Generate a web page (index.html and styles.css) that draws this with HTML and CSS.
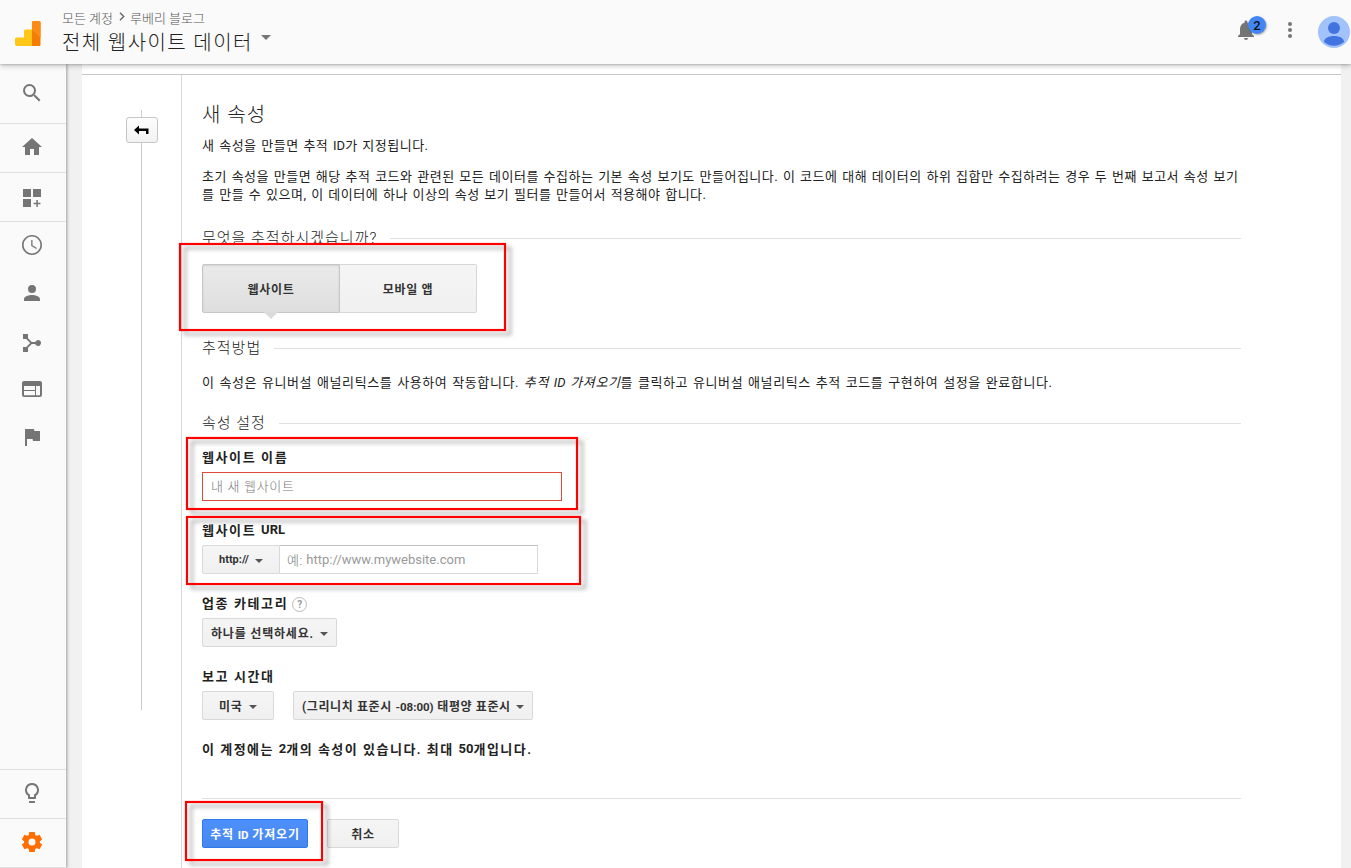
FILE: index.html
```html
<!DOCTYPE html>
<html lang="ko">
<head>
<meta charset="utf-8">
<title>새 속성</title>
<link rel="stylesheet" href="styles.css">
</head>
<body>
<header class="topbar">
  <svg class="logo" width="26" height="26" viewBox="0 0 26 26">
    <path fill="#ffc517" d="M1.500 16.500H9V10a1.500 1.500 0 0 1 1.500-1.500H17V25H2a2 2 0 0 1-2-2v-5a1.500 1.500 0 0 1 1.500-1.500z"/>
    <path fill="#f57c00" d="M18.500 0H24a1.500 1.500 0 0 1 1.500 1.500v22A1.500 1.500 0 0 1 24 25h-7V1.500A1.500 1.500 0 0 1 18.500 0z"/>
    <path fill="#fb8c15" d="M18.500 0H24a1.500 1.500 0 0 1 1.500 1.500V17L17 9V1.500A1.500 1.500 0 0 1 18.500 0z"/>
  </svg>
  <div class="titles">
    <div class="crumbs"><span>모든 계정</span><svg width="6" height="9" viewBox="0 0 6 9"><path d="M1 .8L4.700 4.500 1 8.200" fill="none" stroke="#666" stroke-width="1.400"/></svg><span>루베리 블로그</span></div>
    <div class="view"><span>전체 웹사이트 데이터</span><i class="caret caret-big"></i></div>
  </div>
  <div class="actions">
    <div class="bell">
      <svg width="24" height="24" viewBox="0 0 24 24" fill="#757575"><path d="M12 22c1.100 0 2-.9 2-2h-4c0 1.100.9 2 2 2zm6-6v-5c0-3.070-1.640-5.640-4.500-6.320V4c0-.83-.67-1.500-1.500-1.500s-1.500.67-1.500 1.500v.68C7.630 5.360 6 7.920 6 11v5l-2 2v1h16v-1l-2-2z"/></svg>
      <span class="count">2</span>
    </div>
    <svg class="more" width="6" height="18" viewBox="0 0 6 18" fill="#757575"><circle cx="3" cy="3" r="2"/><circle cx="3" cy="9" r="2"/><circle cx="3" cy="15" r="2"/></svg>
    <svg class="avatar" width="32" height="32" viewBox="0 0 32 32"><circle cx="16" cy="16" r="16" fill="#a1c2fa"/><circle cx="16" cy="12" r="6" fill="#4274e0"/><path fill="#4274e0" d="M6 26c0-4 5-6 10-6s10 2 10 6a15.500 15.500 0 0 1-20 0z"/></svg>
  </div>
</header>
<div class="body">
  <nav class="side">
    <a class="item search"><svg viewBox="0 0 24 24"><path d="M15.500 14h-.79l-.28-.27A6.470 6.470 0 0 0 16 9.500 6.500 6.500 0 1 0 9.500 16c1.610 0 3.090-.59 4.230-1.570l.27.28v.79l5 4.990L20.490 19l-4.990-5zm-6 0C7.010 14 5 11.990 5 9.500S7.010 5 9.500 5 14 7.010 14 9.500 11.990 14 9.500 14z"/></svg></a>
    <a class="item boxed raised"><svg viewBox="0 0 24 24"><path d="M10 20v-6h4v6h5v-8h3L12 3 2 12h3v8z"/></svg></a>
    <a class="item boxed lowered"><svg viewBox="0 0 24 24"><path d="M3 3h8v8H3zM13 3h8v8h-8zM3 13h8v8H3zM16.300 14h1.500v2.700h2.700v1.500h-2.700v2.700h-1.500v-2.700h-2.700v-1.500h2.700z"/></svg></a>
    <div class="reports">
      <a class="item raised"><svg viewBox="0 0 24 24"><path d="M11.990 2C6.470 2 2 6.480 2 12s4.470 10 9.990 10C17.520 22 22 17.520 22 12S17.520 2 11.990 2zM12 20.400a8.400 8.400 0 1 1 0-16.800 8.400 8.400 0 0 1 0 16.800zM12.500 7H11.200v6l5 3 .7-1.100-4.400-2.600z"/></svg></a>
      <a class="item raised"><svg viewBox="0 0 24 24"><path d="M12 12a4 4 0 1 0 0-8 4 4 0 0 0 0 8zm0 2c-2.670 0-8 1.340-8 4v2h16v-2c0-2.660-5.330-4-8-4z"/></svg></a>
      <a class="item lowered"><svg viewBox="0 0 24 24"><path d="M3 3h5v4.200l3.800 3.800h3.400a3 3 0 1 1 0 2h-3.400L8 16.800V21H3v-5h3.200l4-4-4-4H3z"/></svg></a>
      <a class="item raised"><svg viewBox="0 0 24 24"><path fill-rule="evenodd" d="M4 4h16a2 2 0 0 1 2 2v12a2 2 0 0 1-2 2H4a2 2 0 0 1-2-2V6c0-1.100.9-2 2-2zm0 5v4h11V9zm0 5v4.300h11V14zm12-5v9.300h4V9z"/></svg></a>
      <a class="item raised"><svg viewBox="0 0 24 24"><path d="M14.400 6L14 4H5v17h2v-7h5.600l.4 2h7V6z"/></svg></a>
    </div>
    <a class="item boxed raised"><svg viewBox="0 0 24 24"><path d="M9 21c0 .55.450 1 1 1h4c.55 0 1-.45 1-1v-1H9v1zm3-19a7 7 0 0 0-4 12.740V17c0 .55.450 1 1 1h6c.55 0 1-.45 1-1v-2.260A7 7 0 0 0 12 2zm2.850 11.100l-.85.6V16h-4v-2.300l-.85-.6A5 5 0 1 1 17 9c0 1.630-.8 3.160-2.150 4.100z"/></svg></a>
    <a class="item boxed admin raised"><svg viewBox="0 0 24 24"><path fill-rule="evenodd" d="M9.300 2h5.400l.5 2.900 1.500.9 2.800-1 2.700 4.600-2.300 1.900v1.400l2.300 1.900-2.700 4.600-2.800-1-1.500.9-.5 2.900H9.300l-.5-2.900-1.500-.9-2.800 1-2.700-4.600 2.300-1.900v-1.400L1.800 9.400l2.700-4.600 2.800 1 1.500-.9zM12 8.500a3.500 3.500 0 1 0 0 7 3.500 3.500 0 0 0 0-7z"/></svg></a>
  </nav>
  <main class="panel">
    <div class="strip"></div>
    <div class="columns">
      <aside class="rail"><div class="line"><button class="back"><svg width="15" height="10" viewBox="0 0 15 10"><path d="M0 5l5-4.500V3.500h9.500V9H12V6H5v3.500z"/></svg></button></div></aside>
      <section class="content">
        <h1>새 속성</h1>
        <p class="lead">새 속성을 만들면 추적 <span class="latin">ID</span>가 지정됩니다.</p>
        <p class="about">초기 속성을 만들면 해당 추적 코드와 관련된 모든 데이터를 수집하는 기본 속성 보기도 만들어집니다. 이 코드에 대해 데이터의 하위 집합만 수집하려는 경우 두 번째 보고서 속성 보기<br>를 만들 수 있으며, 이 데이터에 하나 이상의 속성 보기 필터를 만들어서 적용해야 합니다.</p>
        <h2 class="q">무엇을 추적하시겠습니까?</h2>
        <div class="tabs"><button class="tab active">웹사이트</button><button class="tab">모바일 앱</button></div>
        <h2 class="method">추적방법</h2>
        <p class="how">이 속성은 유니버설 애널리틱스를 사용하여 작동합니다. <em>추적 <span class="latin">ID</span> 가져오기</em>를 클릭하고 유니버설 애널리틱스 추적 코드를 구현하여 설정을 완료합니다.</p>
        <h2 class="settings">속성 설정</h2>
        <div class="label first">웹사이트 이름</div>
        <div class="field name-field">내 새 웹사이트</div>
        <div class="label">웹사이트 <span class="latin">URL</span></div>
        <div class="url"><button class="btn scheme"><span class="latin">http://</span><i class="caret"></i></button><div class="field url-field">예: <span class="latin">http://www.mywebsite.com</span></div></div>
        <div class="label">업종 카테고리<span class="help">?</span></div>
        <div class="row"><button class="btn industry">하나를 선택하세요.<i class="caret"></i></button></div>
        <div class="label">보고 시간대</div>
        <div class="row"><button class="btn country">미국<i class="caret"></i></button><button class="btn zone"><span>(그리니치 표준시 <span class="latin">-08:00)</span> 태평양 표준시</span><i class="caret"></i></button></div>
        <div class="label quota">이 계정에는 <span class="latin">2</span>개의 속성이 있습니다. 최대 <span class="latin">50</span>개입니다.</div>
        <div class="submit"><button class="btn primary"><span>추적 <span class="latin">ID</span> 가져오기</span></button><button class="btn cancel">취소</button></div>
      </section>
    </div>
  </main>
</div>
<div class="mark mark-type"></div>
<div class="mark mark-name"></div>
<div class="mark mark-url"></div>
<div class="mark mark-submit"></div>
</body>
</html>
```
FILE: styles.css
```css
* { box-sizing: border-box; }
body {
  margin: 0; width: 1351px; height: 868px; overflow: hidden; position: relative;
  display: flex; flex-direction: column;
  font-family: Roboto, "Noto Sans CJK KR", sans-serif; font-size: 13px; color: #222; background: #f1f1f1;
}
button { font-family: inherit; margin: 0; padding: 0; }
h1, h2, p { margin: 0; font-weight: 400; }
.latin { letter-spacing: 0; }

.topbar {
  flex: none; height: 64px; display: flex; background: #fafafa; position: relative; z-index: 2;
  box-shadow: 0 0 2px rgba(0,0,0,.3), 0 2px 5px rgba(0,0,0,.22);
}
.logo { margin: 21px 0 0 15px; }
.titles { margin-left: 21px; padding-top: 8px; }
.crumbs { display: flex; align-items: center; height: 18px; color: #555; font-weight: 300; white-space: nowrap; }
.crumbs svg { margin: -2px 5px 0 6px; }
.view { display: flex; align-items: center; height: 30px; font-size: 20px; font-weight: 300; letter-spacing: 1.4px; color: #212121; white-space: nowrap; }
.caret { display: inline-block; border: 4px solid transparent; border-top-color: #555; border-bottom: 0; }
.caret-big { border-width: 5px 5px 0; border-top-color: #757575; margin: -8px 0 0 8px; }
.actions { margin-left: auto; display: flex; }
.bell { position: relative; margin: 18px 0 0; width: 24px; height: 24px; }
.count {
  position: absolute; left: 14px; top: -2px; width: 18px; height: 18px; border-radius: 50%;
  background: #4285f4; color: #111; font-size: 13px; font-weight: 500; line-height: 19px; text-align: center; box-shadow: 1px 1px 2px rgba(0,0,0,.3);
}
.more { margin: 21px 0 0 29px; }
.avatar { margin: 16px 1px 0 25px; }

.body { flex: 1; display: flex; min-height: 0; }
.side { width: 66px; flex: none; background: #fafafa; display: flex; flex-direction: column; box-shadow: 1px 0 3px rgba(0,0,0,.35); }
.item { display: flex; align-items: center; justify-content: center; padding-right: 2px; height: 49px; flex: none; }
.item svg { width: 24px; height: 24px; fill: #757575; }
.search { height: 59px; padding-bottom: 2px; }
.boxed { border-top: 1px solid #e0e0e0; }
.raised { padding-bottom: 2px; }
.lowered { padding-top: 2px; }
.reports { flex: 1; border-top: 1px solid #e0e0e0; }
.reports .item { height: 48px; }
.admin { height: 50px; border-bottom: 1px solid #e0e0e0; }
.admin svg { fill: #ff6f00; }

.panel { width: 1259px; margin-left: 16px; background: #fff; display: flex; flex-direction: column; }
.strip { height: 11px; flex: none; border-bottom: 1px solid #c6c6c6; }
.columns { flex: 1; display: flex; }
.rail { width: 99px; padding: 35px 0 0 59px; }
.line { height: 600px; border-left: 1px solid #ccc; padding-top: 7px; }
.back { display: flex; align-items: center; justify-content: center; width: 32px; height: 26px; margin-left: -16px; padding-right: 2px; border: 1px solid #c6c6c6; border-radius: 3px; background: linear-gradient(#fdfdfd, #f2f2f2); }
.content { width: 1060px; border-left: 1px solid #d9d9d9; padding: 26px 0 0 20px; }

h1 { height: 28px; line-height: 28px; font-size: 20px; font-weight: 300; letter-spacing: 1px; }
p { line-height: 18px; letter-spacing: .5px; word-spacing: 1px; white-space: nowrap; }
.lead { margin-top: 8px; }
.about { margin-top: 13px; }
h2 { display: flex; align-items: center; gap: 13px; height: 20px; font-size: 15px; line-height: 20px; font-weight: 300; letter-spacing: 1px; white-space: nowrap; }
h2::after { content: ""; flex: 1; height: 1px; background: #e0e0e0; }
.q { margin-top: 24px; }
.method { margin-top: 25px; }
.how { margin-top: 16px; letter-spacing: .6px; }
.settings { margin-top: 21px; }

.tabs { display: flex; margin-top: 16px; height: 49px; }
.tab { position: relative; width: 137px; border: 1px solid #d6d6d6; border-left: 0; border-radius: 0 2px 2px 0; background: linear-gradient(#f5f5f5, #f0f0f0); font-size: 12px; font-weight: 700; letter-spacing: .7px; color: #333; }
.tab.active { width: 138px; border: 1px solid #c6c6c6; border-radius: 2px 0 0 2px; background: linear-gradient(#eaeaea, #dedede); box-shadow: inset 0 1px 2px rgba(0,0,0,.1); }
.tab.active::after { content: ""; position: absolute; left: 61px; top: 47px; border: 7px solid transparent; border-top-color: #dadada; border-bottom: 0; }

.label { display: flex; align-items: center; height: 18px; margin-top: 20px; padding-bottom: 2px; font-weight: 700; letter-spacing: 1.6px; white-space: pre; }
.first { margin-top: 15px; }
.quota { letter-spacing: 1.5px; }
.help { width: 15px; height: 15px; margin: 4px 0 0 4px; border: 1px solid #bbb; border-radius: 50%; font-size: 10px; line-height: 13px; letter-spacing: 0; text-align: center; color: #999; }
.field { display: flex; align-items: center; height: 29px; padding: 0 0 2px 8px; border: 1px solid #d9d9d9; border-top-color: #c0c0c0; background: #fff; font-weight: 300; letter-spacing: .7px; white-space: pre; color: #777; }
.field .latin { font-weight: 400; color: #999; }
.name-field { width: 360px; margin-top: 6px; border-color: #dd4b39; }
.url { display: flex; margin-top: 6px; }
.url-field { width: 258px; padding: 0 0 0 7px; border-left: 0; letter-spacing: .5px; }
.row { display: flex; margin-top: 6px; }
.btn { display: flex; align-items: center; height: 29px; border: 1px solid #d9d9d9; border-radius: 2px; background: linear-gradient(#f5f5f5, #f0f0f0); color: #333; font-size: 12px; font-weight: 700; letter-spacing: .8px; white-space: nowrap; }
.btn .latin { font-size: 11.5px; }
.scheme .latin { font-size: 11px; }
.btn .caret { margin: 3px 0 0 6px; }
.scheme { width: 78px; padding-left: 16px; border-radius: 2px 0 0 2px; }
.industry { width: 135px; padding-left: 8px; }
.country { width: 72px; padding-left: 16px; }
.zone { width: 240px; margin-left: 19px; padding-left: 8px; letter-spacing: .6px; }
.zone .caret { margin-left: 5px; }
.submit { display: flex; gap: 19px; width: 1039px; margin-top: 40px; padding-top: 20px; border-top: 1px solid #e0e0e0; }
.primary { width: 106px; justify-content: center; color: #fff; border-color: #3079ed; background: linear-gradient(#4d90fe, #4787ed); }
.cancel { width: 72px; justify-content: center; }

/* red callout frames floating over the form */
.mark { position: absolute; z-index: 5; border: 2px solid #f00; box-shadow: 0 0 1px rgba(255,0,0,.6), inset 0 0 1px rgba(255,0,0,.6); filter: drop-shadow(5px 4px 2px rgba(0,0,0,.35)); }
.mark-type { left: 179px; top: 243px; width: 327px; height: 88px; }
.mark-name { left: 186px; top: 437px; width: 392px; height: 73px; }
.mark-url { left: 186px; top: 516px; width: 395px; height: 69px; }
.mark-submit { left: 185px; top: 801px; width: 138px; height: 60px; }
```
